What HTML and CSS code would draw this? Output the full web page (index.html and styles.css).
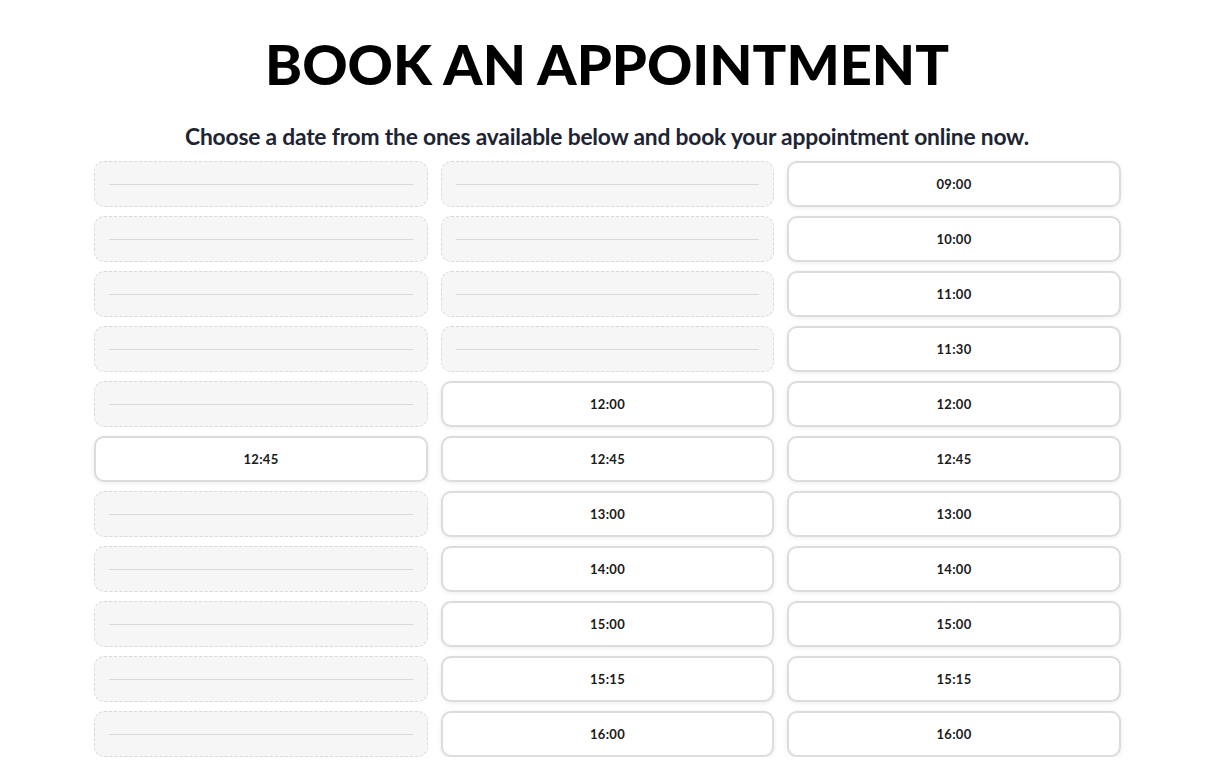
FILE: index.html
```html
<!DOCTYPE html>
<html>
<head>
<meta charset="utf-8">
<link rel="stylesheet" href="styles.css">
</head>
<body>
<div class="page">
  <h1 class="title">BOOK AN APPOINTMENT</h1>
  <p class="subtitle">Choose a date from the ones available below and book your appointment online now.</p>
  <div class="grid">
    <div class="col">
      <div class="slot off"><span class="rule"></span></div>
      <div class="slot off"><span class="rule"></span></div>
      <div class="slot off"><span class="rule"></span></div>
      <div class="slot off"><span class="rule"></span></div>
      <div class="slot off"><span class="rule"></span></div>
      <div class="slot">12:45</div>
      <div class="slot off"><span class="rule"></span></div>
      <div class="slot off"><span class="rule"></span></div>
      <div class="slot off"><span class="rule"></span></div>
      <div class="slot off"><span class="rule"></span></div>
      <div class="slot off"><span class="rule"></span></div>
    </div>
    <div class="col">
      <div class="slot off"><span class="rule"></span></div>
      <div class="slot off"><span class="rule"></span></div>
      <div class="slot off"><span class="rule"></span></div>
      <div class="slot off"><span class="rule"></span></div>
      <div class="slot">12:00</div>
      <div class="slot">12:45</div>
      <div class="slot">13:00</div>
      <div class="slot">14:00</div>
      <div class="slot">15:00</div>
      <div class="slot">15:15</div>
      <div class="slot">16:00</div>
    </div>
    <div class="col">
      <div class="slot">09:00</div>
      <div class="slot">10:00</div>
      <div class="slot">11:00</div>
      <div class="slot">11:30</div>
      <div class="slot">12:00</div>
      <div class="slot">12:45</div>
      <div class="slot">13:00</div>
      <div class="slot">14:00</div>
      <div class="slot">15:00</div>
      <div class="slot">15:15</div>
      <div class="slot">16:00</div>
    </div>
  </div>
</div>
</body>
</html>
```
FILE: styles.css
```css
html, body {
  margin: 0;
  padding: 0;
  background: #ffffff;
}
body {
  font-family: "Lato", "Open Sans", sans-serif;
  color: #111;
}
.page {
  width: 1031px;
  margin: 0 auto;
  padding-left: 5px;
  box-sizing: border-box;
}
.title {
  margin: 28px 0 0 0;
  font-family: "Lato", sans-serif;
  font-weight: 900;
  font-size: 56px;
  line-height: 72px;
  letter-spacing: 0;
  text-align: center;
  color: #000;
}
.subtitle {
  margin: 22px 0 0 0;
  font-family: "Lato", sans-serif;
  font-weight: 700;
  font-size: 22.8px;
  line-height: 28px;
  text-align: center;
  color: #1e2433;
  letter-spacing: -0.2px;
}
.grid {
  display: grid;
  grid-template-columns: 334px 333px 334px;
  column-gap: 13px;
  margin-top: 0;
  padding-top: 11px;
}
.col {
  display: flex;
  flex-direction: column;
  gap: 9px;
}
.slot {
  height: 46px;
  box-sizing: border-box;
  border: 2px solid #dcdcdc;
  border-radius: 10px;
  background: #fff;
  box-shadow: 0 1px 4px rgba(0, 0, 0, 0.08);
  display: flex;
  align-items: center;
  justify-content: center;
  font-size: 13px;
  font-weight: 700;
  color: #1a1a1a;
  letter-spacing: 0.3px;
}
.slot.off {
  border: 1px dashed #d9d9d9;
  background: #f6f6f6;
  box-shadow: none;
  padding: 0 14px;
}
.rule {
  display: block;
  width: 100%;
  height: 1px;
  background: #d9d9d9;
}
```
